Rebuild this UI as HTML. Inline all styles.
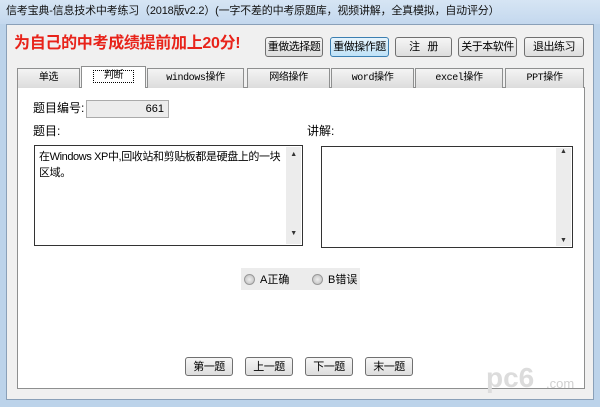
<!DOCTYPE html>
<html><head><meta charset="utf-8"><style>
body{margin:0;width:600px;height:407px;overflow:hidden;background:#bcd3ea;font-family:"Liberation Sans","Noto Sans CJK SC",sans-serif;font-size:12px;color:#000;position:relative}
.a{position:absolute;box-sizing:border-box;white-space:nowrap}
.title{left:0;top:0;width:600px;height:24px;background:linear-gradient(#d6e5f4,#c4d8ee);font-size:11px;line-height:22px;padding-left:6px;color:#111;letter-spacing:-0.2px}
.client{left:6px;top:24px;width:588px;height:376px;background:#f0f0f0;border:1px solid #8aa0b8}
.btn{background:linear-gradient(#f6f6f6,#dddddd);border:1px solid #707070;border-radius:3px;text-align:center;line-height:18px;font-size:11px;letter-spacing:-0.5px;overflow:hidden}
.tab{top:68px;height:20px;background:linear-gradient(#f4f4f4,#dcdcdc);border:1px solid #8e8f8f;border-bottom:none;text-align:center;line-height:19px;font-size:10px;font-family:"Liberation Mono","Noto Sans CJK SC",monospace;letter-spacing:-0.4px}
.panel{left:17px;top:87px;width:568px;height:302px;background:#fff;border:1px solid #8e8f8f}
.tb{background:#fff;border:1px solid #333;white-space:normal}
.sb{background:#ececec;width:15px;top:1px;bottom:1px;right:1px;font-size:7px;text-align:center;color:#333}
.radio{width:11px;height:11px;border-radius:50%;border:1px solid #999;background:radial-gradient(#eee,#bbb)}
</style></head><body>
<div class="a title">信考宝典-信息技术中考练习（2018版v2.2）(一字不差的中考原题库，视频讲解，全真模拟，自动评分）</div>
<div class="a client"></div>
<div class="a" style="left:14px;top:34px;color:#e8231a;font-size:16px;font-weight:bold;line-height:20px;letter-spacing:-0.3px">为自己的中考成绩提前加上20分!</div>
<div class="a btn" style="left:265px;top:37px;width:58px;height:20px">重做选择题</div>
<div class="a btn" style="left:330px;top:37px;width:59px;height:20px;background:linear-gradient(#e6f4fc,#bfe2f7);border-color:#3c7fb1">重做操作题</div>
<div class="a btn" style="left:395px;top:37px;width:57px;height:20px">注&nbsp;&nbsp;&nbsp;册</div>
<div class="a btn" style="left:458px;top:37px;width:59px;height:20px">关于本软件</div>
<div class="a btn" style="left:524px;top:37px;width:60px;height:20px">退出练习</div>
<div class="a panel"></div>
<div class="a tab" style="left:17px;width:63px">单选</div>
<div class="a tab" style="left:81px;top:66px;width:65px;height:22px;background:#fff;z-index:2"><span style="border:1px dotted #000;padding:0 10px">判断</span></div>
<div class="a tab" style="left:147px;width:97px">windows操作</div>
<div class="a tab" style="left:247px;width:83px">网络操作</div>
<div class="a tab" style="left:331px;width:83px">word操作</div>
<div class="a tab" style="left:415px;width:88px">excel操作</div>
<div class="a tab" style="left:505px;width:79px">PPT操作</div>
<div class="a" style="left:33px;top:101px;line-height:14px">题目编号:</div>
<div class="a" style="left:86px;top:100px;width:83px;height:18px;background:#ececec;border:1px solid #aaa;text-align:right;padding-right:4px;line-height:16px;font-size:11px">661</div>
<div class="a" style="left:33px;top:122px">题目:</div>
<div class="a" style="left:307px;top:122px">讲解:</div>
<div class="a tb" style="left:34px;top:145px;width:269px;height:101px;padding:3px 4px;line-height:16px;font-size:11px;letter-spacing:-0.4px"><span style="white-space:nowrap">在Windows XP中,回收站和剪贴板都是硬盘上的一块</span><br>区域。<div class="a sb">▲<div style="position:absolute;bottom:2px;width:15px">▼</div></div></div>
<div class="a tb" style="left:321px;top:146px;width:252px;height:102px"><div class="a sb">▲<div style="position:absolute;bottom:2px;width:15px">▼</div></div></div>
<div class="a" style="left:241px;top:268px;width:119px;height:22px;background:#ececec"></div>
<div class="a radio" style="left:244px;top:274px"></div>
<div class="a" style="left:260px;top:271px;font-size:11px">A正确</div>
<div class="a radio" style="left:312px;top:274px"></div>
<div class="a" style="left:328px;top:271px;font-size:11px">B错误</div>
<div class="a btn" style="left:185px;top:357px;width:48px;height:19px">第一题</div>
<div class="a btn" style="left:245px;top:357px;width:48px;height:19px">上一题</div>
<div class="a btn" style="left:305px;top:357px;width:48px;height:19px">下一题</div>
<div class="a btn" style="left:365px;top:357px;width:48px;height:19px">末一题</div>
<div class="a" style="left:486px;top:364px;font-size:28px;font-weight:bold;color:#dcdcdc;line-height:28px">pc6</div>
<div class="a" style="left:546px;top:376px;font-size:13px;color:#d0d0d0">.com</div>
</body></html>
